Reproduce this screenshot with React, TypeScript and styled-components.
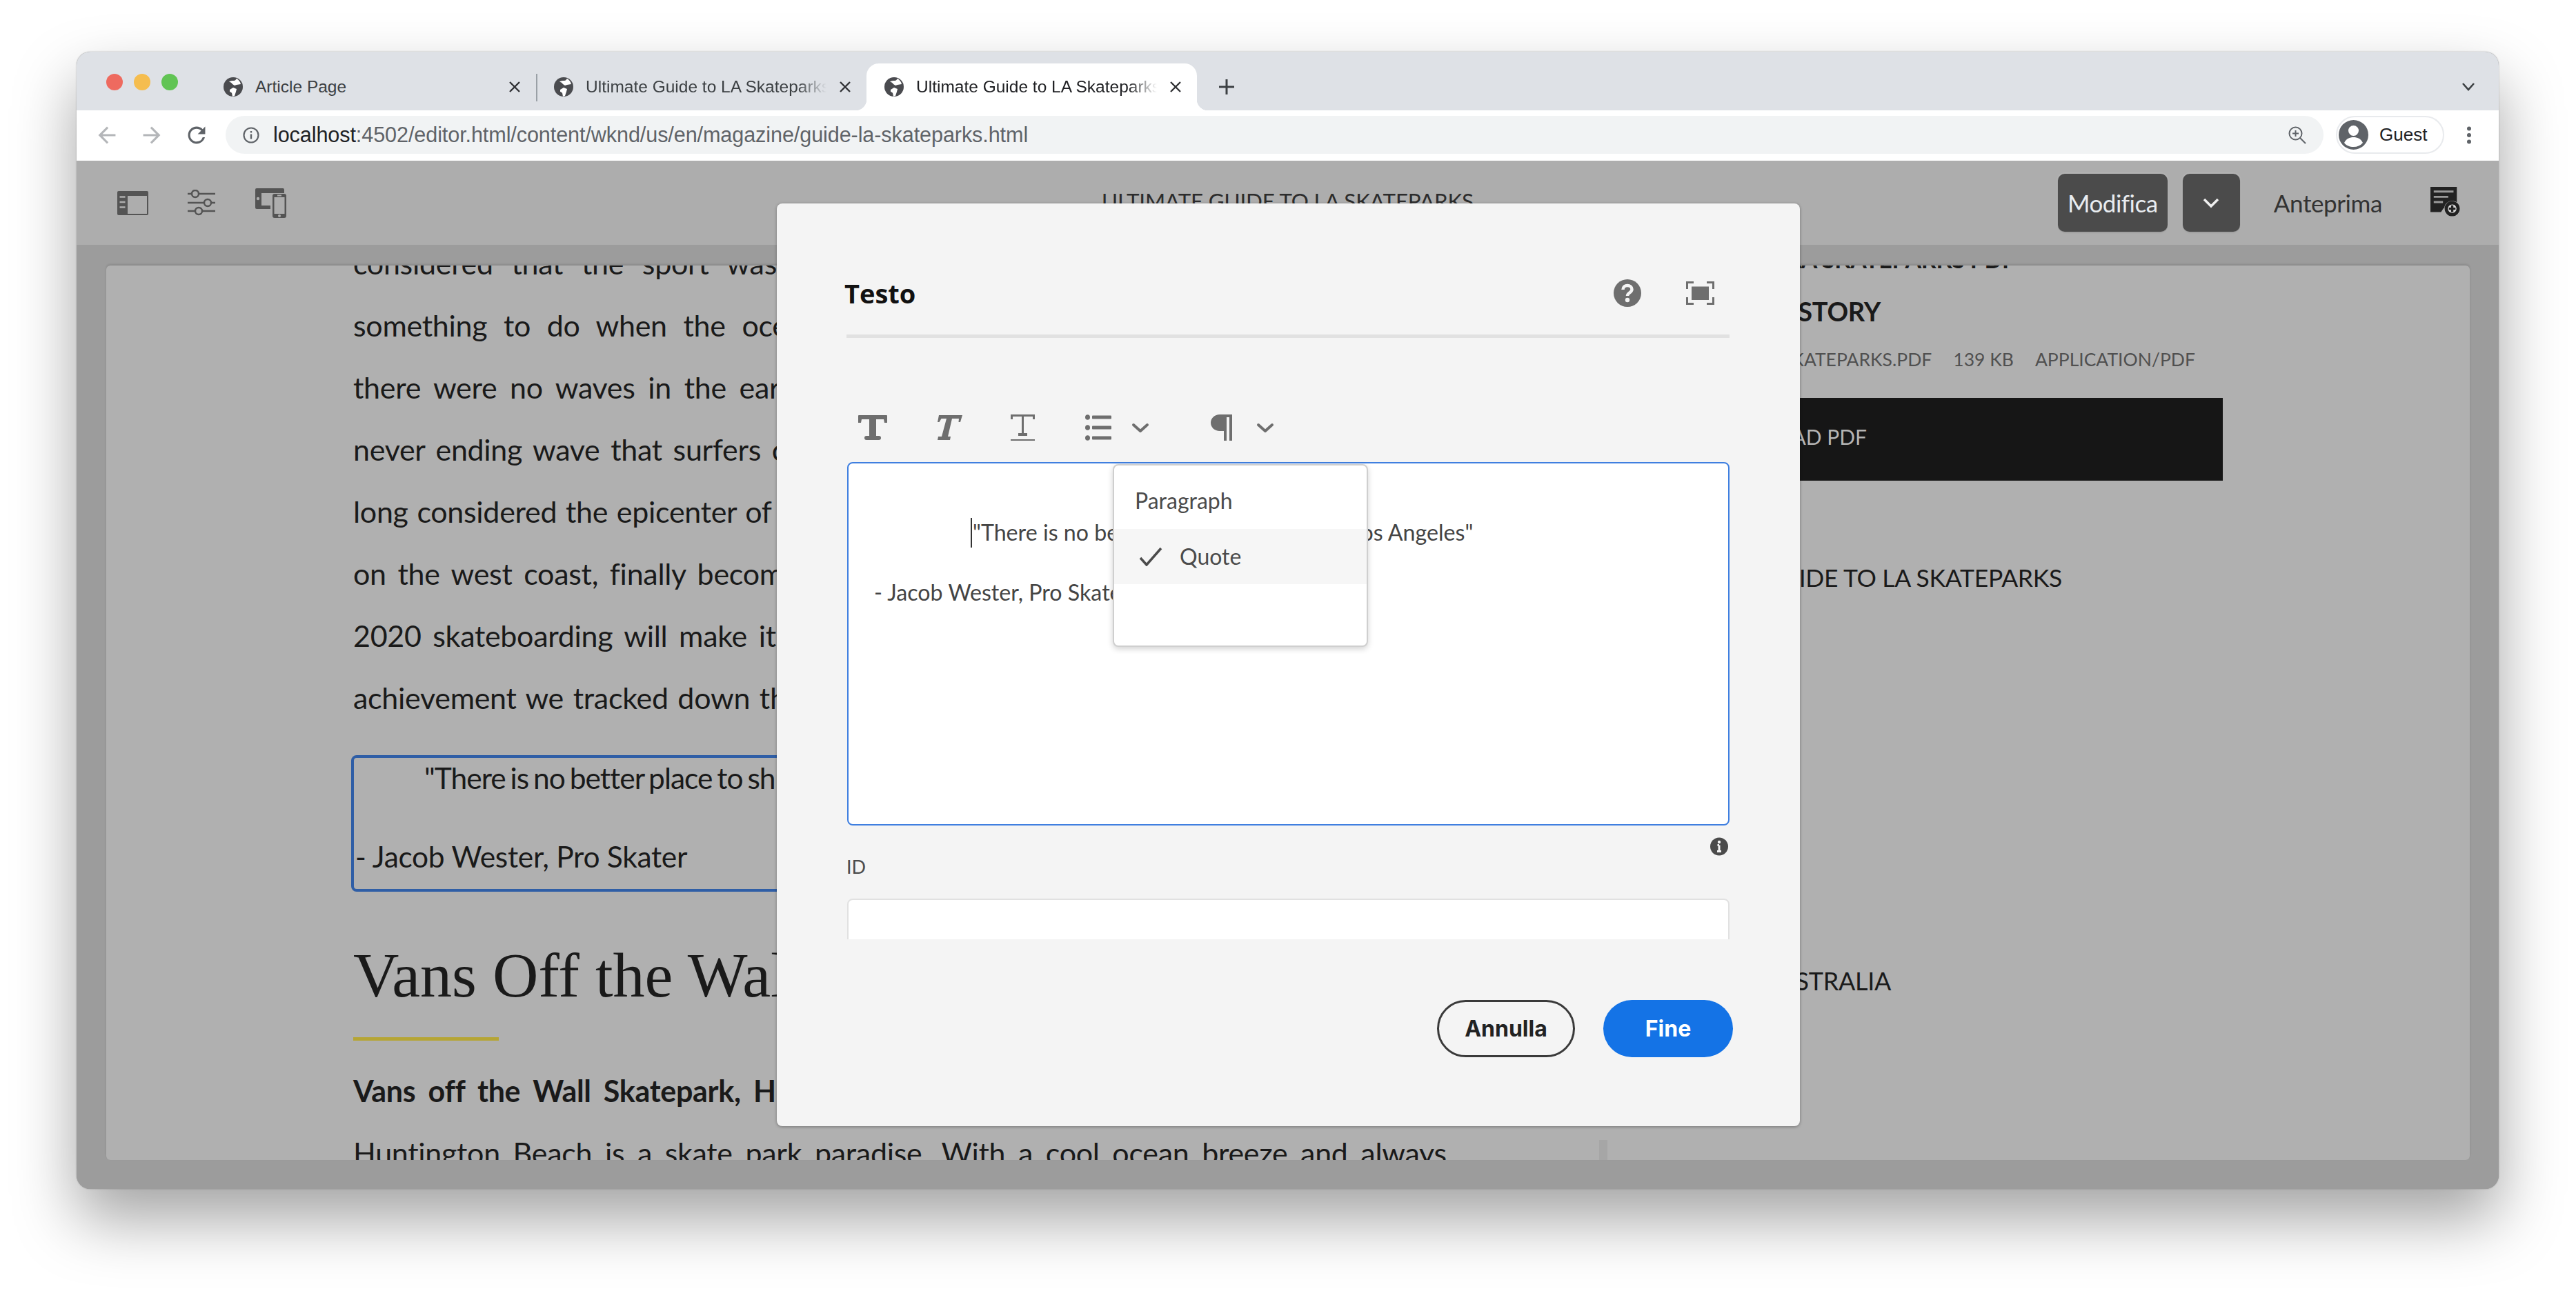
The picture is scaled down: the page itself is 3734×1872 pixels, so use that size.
import React from "react";
import styled, { createGlobalStyle } from "styled-components";

const SANS = `"Lato", "Noto Sans", sans-serif`;
const CHROME = `"Liberation Sans", Arial, sans-serif`;

const Global = createGlobalStyle`
  html, body { margin: 0; padding: 0; background: #fff; }
  * { box-sizing: border-box; }
`;

const Canvas = styled.div`
  width: 3734px;
  height: 1872px;
  padding: 75px 0 0 111px;
  overflow: hidden;
  background: #fff;
`;

const Window = styled.div`
  position: relative;
  width: 3511px;
  height: 1649px;
  display: flex;
  flex-direction: column;
  border-radius: 20px;
  background: #9c9c9c;
  box-shadow: 0 44px 90px rgba(0, 0, 0, 0.36), 0 0 2px rgba(0, 0, 0, 0.3);
`;

const TabStrip = styled.div`
  height: 85px;
  flex: none;
  display: flex;
  align-items: flex-end;
  background: #dee1e6;
  border-radius: 20px 20px 0 0;
  font-family: ${CHROME};
`;

const Lights = styled.div`
  width: 187px;
  height: 88px;
  align-self: flex-start;
  padding-left: 43px;
  display: flex;
  align-items: center;
  gap: 16px;
`;

const Light = styled.span<{ $c: string }>`
  width: 24px;
  height: 24px;
  border-radius: 50%;
  background: ${(p) => p.$c};
`;

const Tab = styled.div<{ $active?: boolean; $sep?: boolean }>`
  position: relative;
  width: 479px;
  height: 68px;
  padding: 0 22px 0 26px;
  display: flex;
  align-items: center;
  gap: 18px;
  font-size: 24.5px;
  color: ${(p) => (p.$active ? "#202124" : "#3c4043")};
  background: ${(p) => (p.$active ? "#fff" : "transparent")};
  border-radius: 18px 18px 0 0;
  ${(p) =>
    p.$active &&
    `
    &::before, &::after {
      content: "";
      position: absolute;
      bottom: 0;
      width: 16px;
      height: 16px;
    }
    &::before { left: -16px; background: radial-gradient(circle at 0 0, transparent 16px, #fff 16.5px); }
    &::after { right: -16px; background: radial-gradient(circle at 100% 0, transparent 16px, #fff 16.5px); }
  `}
  ${(p) =>
    p.$sep &&
    `
    &::before {
      content: "";
      position: absolute;
      left: 0;
      top: 15px;
      width: 2px;
      height: 40px;
      background: #9aa0a6;
    }
  `}
`;

const TabTitle = styled.span<{ $fade?: boolean }>`
  flex: 1;
  min-width: 0;
  white-space: nowrap;
  overflow: hidden;
  ${(p) =>
    p.$fade &&
    `-webkit-mask-image: linear-gradient(90deg, #000 88%, transparent 100%);
     mask-image: linear-gradient(90deg, #000 88%, transparent 100%);`}
`;

const NewTab = styled.span`
  width: 26px;
  height: 26px;
  margin: 0 0 21px 30px;
  display: flex;
`;

const StripEnd = styled.span`
  margin: 0 34px 27px auto;
  display: flex;
`;

const AddressRow = styled.div`
  height: 73px;
  flex: none;
  padding: 8px 0 10px 30px;
  display: flex;
  align-items: center;
  background: #fff;
  font-family: ${CHROME};
`;

const NavIcon = styled.svg<{ $ml?: number }>`
  width: 28px;
  height: 28px;
  flex: none;
  margin-left: ${(p) => p.$ml ?? 0}px;
`;

const AddressBar = styled.div`
  flex: 1;
  height: 55px;
  margin-left: 28px;
  padding: 0 24px 0 25px;
  display: flex;
  align-items: center;
  border-radius: 28px;
  background: #f1f3f4;
  font-size: 30.6px;
`;

const Url = styled.span`
  margin-left: 20px;
  color: #5f6368;
  white-space: nowrap;
  letter-spacing: -0.1px;
`;

const UrlHost = styled.span`
  color: #202124;
`;

const GuestPill = styled.div`
  width: 157px;
  height: 55px;
  margin-left: 18px;
  padding-left: 2px;
  display: flex;
  align-items: center;
  gap: 16px;
  border: 2px solid #e8eaed;
  border-radius: 28px;
  font-size: 26px;
  color: #202124;
`;

const Kebab = styled.span`
  margin: 0 39px 0 32px;
  display: flex;
`;

const AemBar = styled.div`
  height: 122px;
  flex: none;
  display: grid;
  grid-template-columns: 1fr auto 1fr;
  align-items: center;
  background: #adadad;
  font-family: ${SANS};
`;

const AemLeft = styled.div`
  padding-left: 59px;
  display: flex;
  align-items: center;
  gap: 57px;
`;

const AemTitle = styled.div`
  font-size: 31.4px;
  color: #2c2c2c;
  letter-spacing: -0.2px;
  white-space: nowrap;
  margin-bottom: 6px;
`;

const AemRight = styled.div`
  padding-right: 55px;
  display: flex;
  align-items: center;
  justify-content: flex-end;
`;

const AemButton = styled.div<{ $w: number; $mr: number }>`
  width: ${(p) => p.$w}px;
  height: 84px;
  margin-right: ${(p) => p.$mr}px;
  display: flex;
  align-items: center;
  justify-content: center;
  border-radius: 10px;
  background: #4b4b4b;
  color: #e8ecf0;
  font-size: 35px;
  letter-spacing: -0.5px;
  box-shadow: 0 0 0 2px rgba(255, 255, 255, 0.08), 0 1px 2px rgba(0, 0, 0, 0.25);
`;

const AemLink = styled.span`
  margin: 0 70px 0 27px;
  font-size: 35px;
  letter-spacing: -0.4px;
  color: #333;
`;

const Stage = styled.div`
  flex: 1;
  min-height: 0;
  padding: 30px 42px 42px 43px;
  display: flex;
  background: #9c9c9c;
  border-radius: 0 0 20px 20px;
`;

const Frame = styled.div`
  position: relative;
  flex: 1;
  display: flex;
  overflow: hidden;
  border-radius: 6px;
  background: #b0b0b0;
  box-shadow: 0 -2px 3px rgba(0, 0, 0, 0.12);
  font-family: ${SANS};
  color: #1a1a1a;
`;

const Article = styled.div`
  width: 1581px;
  flex: none;
  margin: -48px 0 0 358px;
`;

const Line = styled.div<{ $bold?: boolean; $ws?: number }>`
  height: 90px;
  font-size: 43px;
  line-height: 90px;
  font-weight: ${(p) => (p.$bold ? 700 : 400)};
  word-spacing: ${(p) => p.$ws ?? 0}px;
  letter-spacing: -0.3px;
  white-space: nowrap;
`;

const Selected = styled.div`
  width: 1581px;
  margin: 38px 0 0 -3px;
  padding: 0 0 16px 2px;
  border: 4px solid #2f5ea6;
  border-radius: 8px;
  font-size: 42.5px;
  line-height: 60px;
  letter-spacing: -0.3px;
`;

const QuoteLine = styled.p<{ $indent?: number; $mt?: number; $tight?: boolean }>`
  margin: ${(p) => p.$mt ?? 0}px 0 0 ${(p) => p.$indent ?? 0}px;
  position: relative;
  top: -1px;
  white-space: nowrap;
  ${(p) => p.$tight && "letter-spacing: -1px; word-spacing: -3px;"}
`;

const Heading = styled.h2`
  margin: 71px 0 0;
  font-family: "Liberation Serif", serif;
  font-weight: 400;
  font-size: 92px;
  line-height: 100px;
`;

const Rule = styled.div`
  width: 211px;
  height: 5px;
  margin: 40px 0 28px;
  background: #b5a535;
`;

const Scrollbar = styled.div`
  position: absolute;
  left: 2164px;
  bottom: 0;
  width: 12px;
  height: 29px;
  background: #a6a6a6;
`;

const Side = styled.div`
  width: 922px;
  flex: none;
  margin: -39px 0 0 207px;
  display: flex;
  flex-direction: column;
  white-space: nowrap;
`;

const SideText = styled.div<{ $mt: number; $end: number; $size?: number; $bold?: boolean }>`
  width: ${(p) => p.$end}px;
  height: 60px;
  line-height: 60px;
  margin-top: ${(p) => p.$mt}px;
  display: flex;
  justify-content: flex-end;
  font-size: ${(p) => p.$size ?? 36}px;
  font-weight: ${(p) => (p.$bold ? 700 : 400)};
  letter-spacing: -0.3px;
`;

const Meta = styled.div`
  width: 882px;
  height: 40px;
  margin-top: 20px;
  display: flex;
  justify-content: flex-end;
  align-items: center;
  gap: 31px;
  font-size: 26.5px;
  color: #505050;
`;

const PdfButton = styled.div`
  height: 120px;
  margin-top: 36px;
  padding: 0 516px 8px 0;
  display: flex;
  justify-content: flex-end;
  align-items: center;
  background: #161616;
  color: #b4b4b4;
  font-size: 30px;
`;

const Dialog = styled.div`
  position: absolute;
  left: 1015px;
  top: 220px;
  width: 1483px;
  height: 1338px;
  display: flex;
  flex-direction: column;
  border-radius: 8px;
  background: #f4f4f4;
  box-shadow: 0 1px 4px rgba(0, 0, 0, 0.35);
  font-family: ${SANS};
`;

const DialogHeader = styled.div`
  height: 195px;
  flex: none;
  margin: 0 102px 0 101px;
  padding: 70px 22px 0 0;
  display: flex;
  align-items: center;
  border-bottom: 5px solid #e1e1e1;
`;

const DialogTitle = styled.div`
  flex: 1;
  margin-left: -3px;
  font-family: "Open Sans", sans-serif;
  font-size: 38px;
  font-weight: 700;
  color: #111;
`;

const HeaderGap = styled.span`
  width: 65px;
`;

const RteBar = styled.div`
  height: 38px;
  flex: none;
  margin: 111px 0 0 118px;
  display: flex;
  align-items: center;
`;

const RteIcon = styled.svg<{ $ml?: number }>`
  flex: none;
  margin-left: ${(p) => p.$ml ?? 0}px;
`;

const Editor = styled.div`
  position: relative;
  height: 527px;
  flex: none;
  margin: 31px 102px 0 102px;
  padding: 75px 0 0 37px;
  border: 2px solid #3f7fe0;
  border-radius: 8px;
  background: #fff;
  font-size: 32.2px;
  line-height: 50px;
  color: #444;
`;

const EditorLine = styled.p<{ $indent?: number; $mt?: number }>`
  margin: ${(p) => p.$mt ?? 0}px 0 0 ${(p) => p.$indent ?? 0}px;
  white-space: nowrap;
`;

const Caret = styled.span`
  display: inline-block;
  width: 2px;
  height: 43px;
  margin-right: 1px;
  vertical-align: -10px;
  background: #333;
`;

const Menu = styled.div`
  position: absolute;
  left: 383px;
  top: 1px;
  width: 370px;
  height: 265px;
  padding-top: 92px;
  border: 2px solid #cfcfcf;
  border-radius: 8px;
  background: #fff;
  box-shadow: 0 3px 8px rgba(0, 0, 0, 0.18);
  font-size: 32px;
  line-height: 50px;
  color: #4b4b4b;
`;

const MenuPara = styled.div`
  position: absolute;
  left: 30px;
  top: 26px;
`;

const MenuRow = styled.div`
  height: 80px;
  padding-left: 36px;
  display: flex;
  align-items: center;
  gap: 25px;
  background: #f6f6f6;
`;

const InfoRow = styled.div`
  flex: none;
  margin: 17px 104px 0 102px;
  display: flex;
  justify-content: flex-end;
`;

const FieldLabel = styled.div`
  flex: none;
  margin: 1px 0 -2px 101px;
  height: 30px;
  line-height: 30px;
  font-size: 27px;
  color: #4b4b4b;
`;

const FieldClip = styled.div`
  height: 59px;
  flex: none;
  margin: 33px 102px 0;
  overflow: hidden;
`;

const FieldInput = styled.div`
  height: 90px;
  border: 2px solid #e1e1e1;
  border-radius: 8px;
  background: #fff;
`;

const Footer = styled.div`
  flex: none;
  margin-top: 88px;
  padding-right: 97px;
  display: flex;
  justify-content: flex-end;
  gap: 41px;
`;

const PillButton = styled.div<{ $primary?: boolean; $w: number }>`
  width: ${(p) => p.$w}px;
  height: 83px;
  display: flex;
  align-items: center;
  justify-content: center;
  border-radius: 42px;
  border: ${(p) => (p.$primary ? "none" : "3px solid #3a3a3a")};
  background: ${(p) => (p.$primary ? "#1473e6" : "transparent")};
  color: ${(p) => (p.$primary ? "#fff" : "#222")};
  font-family: "Inter", sans-serif;
  font-size: 32px;
  font-weight: 700;
`;

const Globe = () => (
  <svg width="28" height="28" viewBox="0 0 28 28" style={{ flex: "none" }}>
    <circle cx="14" cy="14" r="14" fill="#4a4b4f" />
    <path d="M8 7c2-.5 4 1 5 3l3 2 3-1 6-1c-1-4-3-6-6-8-1 1-2 3-4 3-3 0-5 0-7 2zM9 18l5-3 5 2-1 4-2 6-3 .8-1-5-3-2z" fill="#fff" />
  </svg>
);

const CloseX = () => (
  <svg width="18" height="18" viewBox="0 0 18 18" style={{ flex: "none" }}>
    <path d="M2 2l14 14M16 2L2 16" stroke="#303134" strokeWidth="2.4" />
  </svg>
);

const Chevron = ({ w, h, c, sw, ml }: { w: number; h: number; c: string; sw: number; ml?: number }) => (
  <RteIcon $ml={ml} width={w} height={h} viewBox={`0 0 ${w} ${h}`}>
    <path d={`M${sw / 2 + 1} ${sw / 2 + 1}L${w / 2} ${h - sw / 2 - 1}L${w - sw / 2 - 1} ${sw / 2 + 1}`} stroke={c} strokeWidth={sw} fill="none" strokeLinecap="round" strokeLinejoin="round" />
  </RteIcon>
);

const G = "#6e6e6e";

export default function App() {
  return (
    <Canvas>
      <Global />
      <Window>
        <TabStrip>
          <Lights>
            <Light $c="#ee6a5f" />
            <Light $c="#f5bd4f" />
            <Light $c="#61c454" />
          </Lights>
          <Tab>
            <Globe />
            <TabTitle>Article Page</TabTitle>
            <CloseX />
          </Tab>
          <Tab $sep>
            <Globe />
            <TabTitle $fade>Ultimate Guide to LA Skateparks</TabTitle>
            <CloseX />
          </Tab>
          <Tab $active>
            <Globe />
            <TabTitle $fade>Ultimate Guide to LA Skateparks</TabTitle>
            <CloseX />
          </Tab>
          <NewTab>
            <svg width="26" height="26" viewBox="0 0 26 26">
              <path d="M13 2v22M2 13h22" stroke="#3c4043" strokeWidth="3" />
            </svg>
          </NewTab>
          <StripEnd>
            <svg width="20" height="14" viewBox="0 0 20 14">
              <path d="M2 2l8 9 8-9" stroke="#3c4043" strokeWidth="2.6" fill="none" />
            </svg>
          </StripEnd>
        </TabStrip>

        <AddressRow>
          <NavIcon viewBox="3 3 18 18">
            <path d="M20 11H7.83l5.59-5.59L12 4l-8 8 8 8 1.41-1.41L7.83 13H20z" fill="#b4b6b9" />
          </NavIcon>
          <NavIcon $ml={37} viewBox="3 3 18 18">
            <path d="M4 11h12.17l-5.59-5.59L12 4l8 8-8 8-1.41-1.41L16.17 13H4z" fill="#b4b6b9" />
          </NavIcon>
          <NavIcon $ml={37} viewBox="3 3 18 18">
            <path d="M17.65 6.35A7.958 7.958 0 0 0 12 4c-4.42 0-7.99 3.58-7.99 8s3.57 8 7.99 8c3.73 0 6.84-2.55 7.73-6h-2.08A5.99 5.99 0 0 1 12 18c-3.31 0-6-2.69-6-6s2.69-6 6-6c1.66 0 3.14.69 4.22 1.78L13 11h7V4l-2.35 2.35z" fill="#5f6368" />
          </NavIcon>
          <AddressBar>
            <svg width="24" height="26" viewBox="0 0 24 26" style={{ flex: "none" }}>
              <circle cx="12" cy="13" r="10.5" fill="none" stroke="#5f6368" strokeWidth="2.2" />
              <path d="M12 11.5v7M12 7v2.6" stroke="#5f6368" strokeWidth="2.4" />
            </svg>
            <Url>
              <UrlHost>localhost</UrlHost>:4502/editor.html/content/wknd/us/en/magazine/guide-la-skateparks.html
            </Url>
            <svg width="28" height="28" viewBox="0 0 28 28" style={{ marginLeft: "auto", flex: "none" }}>
              <circle cx="11.5" cy="11.5" r="9" fill="none" stroke="#5f6368" strokeWidth="2" />
              <path d="M18 18l8 8M11.5 7v9M7 11.5h9" stroke="#5f6368" strokeWidth="2" />
            </svg>
          </AddressBar>
          <GuestPill>
            <svg width="43" height="43" viewBox="0 0 43 43" style={{ flex: "none" }}>
              <circle cx="21.5" cy="21.5" r="21.5" fill="#5f6368" />
              <circle cx="21.5" cy="15.5" r="7.5" fill="#fff" />
              <path d="M8 33c3-6 8-8 13.5-8S32 27 35 33c-3.500 4-8 6-13.500 6S11 37 8 33z" fill="#fff" />
            </svg>
            Guest
          </GuestPill>
          <Kebab>
            <svg width="8" height="26" viewBox="0 0 8 26">
              <circle cx="4" cy="3.500" r="3" fill="#5f6368" />
              <circle cx="4" cy="13" r="3" fill="#5f6368" />
              <circle cx="4" cy="22.500" r="3" fill="#5f6368" />
            </svg>
          </Kebab>
        </AddressRow>

        <AemBar>
          <AemLeft>
            <svg width="45" height="35" viewBox="0 0 45 35">
              <rect width="45" height="35" rx="2" fill="#545454" />
              <rect x="15" y="7" width="28" height="26" fill="#adadad" />
              <path d="M3.500 8.500h8M3.500 16h8M3.500 23.500h8" stroke="#adadad" strokeWidth="2.500" />
            </svg>
            <svg width="41" height="38" viewBox="0 0 41 38">
              <path d="M0 6h40M0 19h40M0 31h40" stroke="#545454" strokeWidth="2.500" />
              <circle cx="11" cy="6" r="5" fill="#adadad" stroke="#545454" strokeWidth="2.500" />
              <circle cx="29" cy="19" r="5" fill="#adadad" stroke="#545454" strokeWidth="2.500" />
              <circle cx="16" cy="31" r="5" fill="#adadad" stroke="#545454" strokeWidth="2.500" />
            </svg>
            <svg width="46" height="43" viewBox="0 0 46 43">
              <path d="M2 0h38a2 2 0 0 1 2 2v5H9v23H2a2 2 0 0 1-2-2V2a2 2 0 0 1 2-2z" fill="#545454" />
              <rect x="8" y="25" width="14" height="5" fill="#545454" />
              <circle cx="4" cy="15" r="2.200" fill="#adadad" />
              <rect x="25" y="8" width="20" height="35" rx="3" fill="#545454" />
              <rect x="27.500" y="13" width="15" height="24" fill="#adadad" />
              <circle cx="35" cy="40" r="2" fill="#adadad" />
              <rect x="32" y="9.500" width="6" height="2" fill="#adadad" />
            </svg>
          </AemLeft>
          <AemTitle>ULTIMATE GUIDE TO LA SKATEPARKS</AemTitle>
          <AemRight>
            <AemButton $w={159} $mr={22}>Modifica</AemButton>
            <AemButton $w={83} $mr={22}>
              <svg width="26" height="16" viewBox="0 0 26 16">
                <path d="M3 3l10 10L23 3" stroke="#f0f0f0" strokeWidth="3.500" fill="none" />
              </svg>
            </AemButton>
            <AemLink>Anteprima</AemLink>
            <svg width="44" height="48" viewBox="0 0 46 48">
              <path d="M0 0h40v32H20l-4 6H0z" fill="#222" />
              <path d="M5 7h30M5 15h22M5 23h14" stroke="#9a9a9a" strokeWidth="3" />
              <circle cx="33" cy="33" r="12" fill="#c4c4c4" />
              <circle cx="33" cy="33" r="9" fill="#ddd" stroke="#222" strokeWidth="5" />
              <path d="M33 28v10M28 33h10" stroke="#222" strokeWidth="3.500" />
            </svg>
          </AemRight>
        </AemBar>

        <Stage>
          <Frame>
            <Article>
              <Line $ws={16}>considered that the sport was the rebellious sibling of surfing,</Line>
              <Line $ws={13}>something to do when the ocean was flat. Surfers would skate</Line>
              <Line $ws={8}>there were no waves in the early days, chasing the feeling</Line>
              <Line $ws={5}>never ending wave that surfers crave. Los Angeles, which</Line>
              <Line $ws={2}>long considered the epicenter of skateboarding culture</Line>
              <Line $ws={6}>on the west coast, finally becomes a home for the world</Line>
              <Line $ws={6}>2020 skateboarding will make its debut at the Olympics.</Line>
              <Line $ws={3}>achievement we tracked down the best skateparks around.</Line>
              <Selected>
                <QuoteLine $indent={100} $tight>"There is no better place to shred than Los Angeles"</QuoteLine>
                <QuoteLine $mt={54}>- Jacob Wester, Pro Skater</QuoteLine>
              </Selected>
              <Heading>Vans Off the Wall</Heading>
              <Rule />
              <Line $bold $ws={8}>Vans off the Wall Skatepark, Huntington Beach</Line>
              <Line $ws={8}>Huntington Beach is a skate park paradise. With a cool ocean breeze and always</Line>
            </Article>
            <Side>
              <SideText $mt={0} $end={621} $bold $size={34}>ULTIMATE GUIDE TO LA SKATEPARKS PDF</SideText>
              <SideText $mt={15} $end={426} $bold $size={38}>THE FULL STORY</SideText>
              <Meta>
                <span>GUIDE-LA-SKATEPARKS.PDF</span>
                <span>139 KB</span>
                <span>APPLICATION/PDF</span>
              </Meta>
              <PdfButton>DOWNLOAD PDF</PdfButton>
              <SideText $mt={111} $end={689} $size={35.5}>ULTIMATE GUIDE TO LA SKATEPARKS</SideText>
              <SideText $mt={524} $end={441}>WKND AUSTRALIA</SideText>
            </Side>
            <Scrollbar />
          </Frame>
        </Stage>

        <Dialog>
          <DialogHeader>
            <DialogTitle>Testo</DialogTitle>
            <svg width="40" height="40" viewBox="0 0 40 40">
              <circle cx="20" cy="20" r="20" fill={G} />
              <path d="M13.500 15c0-4 3-6 6.500-6s6.500 2 6.500 5.500c0 5-6.500 5-6.500 9.500" fill="none" stroke="#f4f4f4" strokeWidth="4.500" />
              <circle cx="20" cy="30" r="3.200" fill="#f4f4f4" />
            </svg>
            <HeaderGap />
            <svg width="41" height="34" viewBox="0 0 41 34">
              <path d="M1.500 11V1.500H11M30 1.500h9.500V11M39.500 23v9.500H30M11 32.500H1.500V23" fill="none" stroke={G} strokeWidth="3" />
              <rect x="8" y="7.500" width="25" height="19.500" fill={G} />
            </svg>
          </DialogHeader>

          <RteBar>
            <RteIcon width="42" height="36" viewBox="0 0 42 36">
              <path d="M1 0h40a1 1 0 0 1 1 1v10h-4l-1-5H26v24h4a2.500 2.500 0 0 1 0 6H12a2.500 2.500 0 0 1 0-6h4V6H5l-1 5H0V1a1 1 0 0 1 1-1z" fill={G} />
            </RteIcon>
            <RteIcon $ml={71} width="38" height="36" viewBox="0 0 38 36">
              <path d="M4 0h34l-3 10h-2.500l.5-5H23l-6 26h4l-1 5H2l1-5h5l7-26H7.500l-3 5H2z" fill={G} />
            </RteIcon>
            <RteIcon $ml={70} width="35" height="38" viewBox="0 0 35 38">
              <path d="M0 0h35v7h-3V3H19v24h5v4H11v-4h5V3H3v4H0z" fill={G} />
              <rect y="36" width="35" height="2" fill={G} />
            </RteIcon>
            <RteIcon $ml={73} width="38" height="38" viewBox="0 0 38 38">
              <ellipse cx="3.500" cy="4" rx="3.500" ry="3.800" fill={G} />
              <ellipse cx="3.500" cy="19" rx="3.500" ry="3.800" fill={G} />
              <ellipse cx="3.500" cy="34" rx="3.500" ry="3.800" fill={G} />
              <rect x="10" y="1.500" width="28" height="5" rx="1" fill={G} />
              <rect x="10" y="16.500" width="28" height="5" rx="1" fill={G} />
              <rect x="10" y="31.500" width="28" height="5" rx="1" fill={G} />
            </RteIcon>
            <Chevron ml={29} w={26} h={15} c={G} sw={4} />
            <RteIcon $ml={89} width="31" height="38" viewBox="0 0 31 38">
              <path d="M13 0h18v38h-4V4h-4v34h-4V24h-6C6 24 0 19 0 12S6 0 13 0z" fill={G} />
            </RteIcon>
            <Chevron ml={35} w={26} h={15} c={G} sw={4} />
          </RteBar>

          <Editor>
            <EditorLine $indent={140}>
              <Caret />
              "There is no better place to shred than Los Angeles"
            </EditorLine>
            <EditorLine $mt={37}>- Jacob Wester, Pro Skater</EditorLine>
            <Menu>
              <MenuPara>Paragraph</MenuPara>
              <MenuRow>
                <svg width="34" height="28" viewBox="0 0 34 28" style={{ flex: "none" }}>
                  <path d="M2 16l9 10L32 2" fill="none" stroke="#4b4b4b" strokeWidth="3.500" />
                </svg>
                Quote
              </MenuRow>
            </Menu>
          </Editor>

          <InfoRow>
            <svg width="26" height="27" viewBox="0 0 26 27">
              <circle cx="13" cy="13.500" r="13" fill="#4b4b4b" />
              <path d="M13 11.500v9M10 20.500h6M10.500 11.500H13" stroke="#f4f4f4" strokeWidth="3" fill="none" />
              <circle cx="13" cy="7" r="2.200" fill="#f4f4f4" />
            </svg>
          </InfoRow>
          <FieldLabel>ID</FieldLabel>
          <FieldClip>
            <FieldInput />
          </FieldClip>
          <Footer>
            <PillButton $w={200}>Annulla</PillButton>
            <PillButton $primary $w={188}>Fine</PillButton>
          </Footer>
        </Dialog>
      </Window>
    </Canvas>
  );
}
